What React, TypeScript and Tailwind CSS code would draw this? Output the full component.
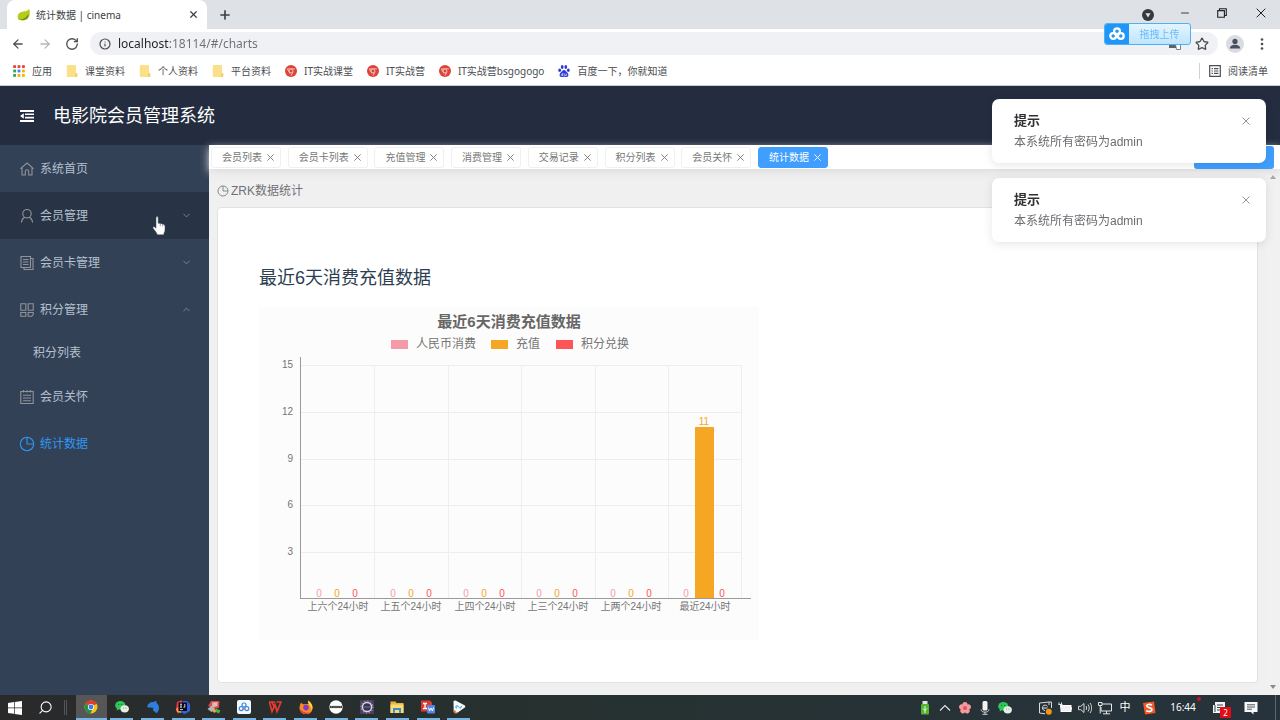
import type { ReactNode } from 'react';
import {
  ArrowLeft,
  ArrowRight,
  ChevronDown,
  ChevronUp,
  Info,
  Minus,
  Plus,
  RotateCw,
  Search,
  Star,
  X,
} from 'lucide-react';
import { clsx } from 'clsx';

const UI_FONT = "font-['Noto_Sans','Noto_Sans_CJK_SC',sans-serif]";
const PAGE_FONT = "font-['Liberation_Sans','Noto_Sans_CJK_SC',sans-serif]";

type BookmarkIcon = 'apps' | 'folder' | 'chrome' | 'baidu';

const BOOKMARKS: { label: string; icon: BookmarkIcon }[] = [
  { label: '应用', icon: 'apps' },
  { label: '课堂资料', icon: 'folder' },
  { label: '个人资料', icon: 'folder' },
  { label: '平台资料', icon: 'folder' },
  { label: 'IT实战课堂', icon: 'chrome' },
  { label: 'IT实战营', icon: 'chrome' },
  { label: 'IT实战营bsgogogo', icon: 'chrome' },
  { label: '百度一下，你就知道', icon: 'baidu' },
];

const TAGS = [
  '会员列表',
  '会员卡列表',
  '充值管理',
  '消费管理',
  '交易记录',
  '积分列表',
  '会员关怀',
  '统计数据',
];

const SERIES = [
  { name: '人民币消费', color: '#f79aa7', data: [0, 0, 0, 0, 0, 0], legendX: 132 },
  { name: '充值', color: '#f5a623', data: [0, 0, 0, 0, 0, 11], legendX: 232 },
  { name: '积分兑换', color: '#fd5558', data: [0, 0, 0, 0, 0, 0], legendX: 297 },
];

const PERIODS = [
  '上六个24小时',
  '上五个24小时',
  '上四个24小时',
  '上三个24小时',
  '上两个24小时',
  '最近24小时',
];

export default function App() {
  return (
    <div className={clsx('flex min-h-screen flex-col bg-white', UI_FONT)}>
      <TabStrip />
      <Toolbar />
      <BookmarkBar />
      <div className={clsx('flex flex-1 flex-col', PAGE_FONT)}>
        <header className="flex h-[59px] items-center gap-[19px] bg-[#242d40] pl-5 text-white">
          <button type="button" aria-label="折叠菜单">
            <FoldIcon />
          </button>
          <h1 className="text-[18px] leading-6">电影院会员管理系统</h1>
        </header>
        <div className="flex flex-1">
          <Sidebar />
          <Main />
        </div>
      </div>
      <Taskbar />
      <div className={clsx('fixed top-[99px] right-[14px] z-20 flex w-[274px] flex-col gap-[15px]', PAGE_FONT)}>
        <Notification />
        <Notification />
      </div>
      <UploadWidget />
    </div>
  );
}

/* ---------- Browser chrome ---------- */

function TabStrip() {
  return (
    <div className="flex h-[29px] items-center bg-[#dee1e6] pl-[7px] text-[#3c4043]">
      <div className="flex h-full w-[200px] items-center rounded-t-lg bg-white pr-2 pl-[10px]">
        <LeafIcon />
        <span className="ml-[6px] flex-1 text-[10px] leading-4">统计数据 | cinema</span>
        <button type="button" aria-label="关闭标签页">
          <X size={11} strokeWidth={2.6} />
        </button>
      </div>
      <button type="button" aria-label="新标签页" className="ml-[11px]">
        <Plus size={14} strokeWidth={2.8} />
      </button>
      <div className="ml-auto flex h-full items-center pr-[14px] pb-1">
        <svg viewBox="0 0 12 12" className="mt-1 mr-[25px] size-3">
          <circle cx="6" cy="6" r="6" fill="#35383c" />
          <path d="M3.4 4.2h5.2L6 8.4z" fill="#dee1e6" />
        </svg>
        <button type="button" aria-label="最小化" className="mr-[26px]">
          <Minus size={12} strokeWidth={2} />
        </button>
        <button type="button" aria-label="还原" className="mr-[29px]">
          <svg viewBox="0 0 10 10" className="size-[10px]" fill="none" stroke="#222" strokeWidth="1.1">
            <path d="M.7 2.6h6.7v6.7H.7zM2.5 2.4V.7h6.8v6.8H7.6" />
          </svg>
        </button>
        <button type="button" aria-label="关闭">
          <svg viewBox="0 0 10 10" className="size-[10px]" fill="none" stroke="#222" strokeWidth="1">
            <path d="M.7.7l8.6 8.6M9.3.7L.7 9.3" />
          </svg>
        </button>
      </div>
    </div>
  );
}

function Toolbar() {
  return (
    <div className="flex h-[29px] items-center pr-3 pl-[11px] text-[#4a4d51]">
      <div className="flex w-[79px] gap-[13px]">
        <button type="button" aria-label="后退">
          <ArrowLeft size={14} strokeWidth={2.2} />
        </button>
        <button type="button" aria-label="前进" className="text-[#b4b6ba]">
          <ArrowRight size={14} strokeWidth={2.2} />
        </button>
        <button type="button" aria-label="重新加载">
          <RotateCw size={14} strokeWidth={2.2} />
        </button>
      </div>
      <div className="flex h-[23px] flex-1 items-center rounded-full bg-[#f0f1f4] px-[9px]">
        <Info size={12} strokeWidth={2.4} />
        <input
          aria-label="地址栏"
          defaultValue="localhost:18114/#/charts"
          className="ml-[7px] min-w-0 flex-1 bg-[linear-gradient(90deg,#202124_51px,#6b6f74_51px)] bg-clip-text text-[12px] leading-4 text-transparent outline-none"
        />
        <svg viewBox="0 0 12 12" className="mr-[14px] size-3">
          <path d="M0 1h7l2 9H0z" fill="#5f6368" />
          <path d="M6 4h5.5v7.5H7.5z" fill="#fff" stroke="#5f6368" strokeWidth=".8" />
        </svg>
        <button type="button" aria-label="收藏">
          <Star size={14} strokeWidth={2.2} />
        </button>
      </div>
      <svg viewBox="0 0 18 18" className="ml-2 size-[18px]">
        <circle cx="9" cy="9" r="9" fill="#dadce3" />
        <circle cx="9" cy="6.4" r="2.6" fill="#4a4f5c" />
        <path d="M3.8 13.6c0-2.6 2.6-3.8 5.2-3.8s5.2 1.2 5.2 3.8z" fill="#4a4f5c" />
      </svg>
      <button type="button" aria-label="菜单" className="ml-3">
        <svg viewBox="0 0 12 12" className="size-3" fill="#4a4d51">
          <circle cx="6" cy="1.5" r="1.3" />
          <circle cx="6" cy="6" r="1.3" />
          <circle cx="6" cy="10.5" r="1.3" />
        </svg>
      </button>
    </div>
  );
}

function BookmarkBar() {
  return (
    <div className="flex h-7 items-center border-b border-[#c9ccd0] pr-3 pb-[2px] pl-[13px] text-[10px] leading-4 text-[#4a4d51]">
      <nav className="flex gap-[14px]">
        {BOOKMARKS.map((item) => (
          <a key={item.label} href="#" className="flex items-center gap-[7px] whitespace-nowrap">
            <BookmarkGlyph icon={item.icon} />
            {item.label}
          </a>
        ))}
      </nav>
      <a href="#" className="ml-auto flex items-center gap-[7px] border-l border-[#cfd1d5] pl-[9px]">
        <svg viewBox="0 0 12 12" className="size-3" fill="none" stroke="#4a4d51" strokeWidth="1.2">
          <path d="M.7.7h10.6v10.6H.7zM2.6 3.6h1.3M2.6 6h1.3M2.6 8.4h1.3M5 3.6h4.4M5 6h4.4M5 8.4h4.4" />
        </svg>
        阅读清单
      </a>
    </div>
  );
}

function BookmarkGlyph({ icon }: { icon: BookmarkIcon }) {
  if (icon === 'apps') {
    const colors = ['#e8453c', '#e8453c', '#e8453c', '#34a853', '#4285f4', '#f4b400', '#34a853', '#f4b400', '#f4b400'];
    return (
      <svg viewBox="0 0 12 12" className="size-3">
        {colors.map((color, i) => (
          <rect key={i} x={(i % 3) * 4.4 + 0.2} y={Math.floor(i / 3) * 4.4 + 0.2} width="2.8" height="2.8" fill={color} />
        ))}
      </svg>
    );
  }
  if (icon === 'folder') {
    return (
      <svg viewBox="0 0 12 12" className="size-3">
        <path d="M1.6 0h7.6c.5 0 .8.3.8.8v7.4h1.2v3c0 .5-.3.8-.8.8H1.6c-.5 0-.8-.3-.8-.8V.8c0-.5.3-.8.8-.8z" fill="#fbe08a" />
        <path d="M10 8.2h1.2v3c0 .5-.3.8-.8.8H9.2V9z" fill="#f2cb62" />
      </svg>
    );
  }
  if (icon === 'chrome') {
    return (
      <svg viewBox="0 0 12 12" className="size-3">
        <circle cx="6" cy="6" r="6" fill="#db4437" />
        <path d="M2.4 3.9h7.4M2.4 3.9L5 8.6M8 6.8L6 10.6" stroke="#fbe3e0" strokeWidth=".8" fill="none" />
        <circle cx="6" cy="6" r="1.9" fill="#db4437" stroke="#fbe3e0" strokeWidth=".7" />
      </svg>
    );
  }
  return (
    <svg viewBox="0 0 12 12" className="size-3" fill="#2f3bdb">
      <ellipse cx="1.7" cy="5.2" rx="1.4" ry="1.8" />
      <ellipse cx="4.2" cy="2" rx="1.4" ry="1.9" />
      <ellipse cx="7.8" cy="2" rx="1.4" ry="1.9" />
      <ellipse cx="10.3" cy="5.2" rx="1.4" ry="1.8" />
      <path d="M6 5c1.6 0 2 1.5 3.2 2.5C10.8 8.8 11 12 8.6 12 7.5 12 7 11.7 6 11.7S4.500 12 3.400 12C1 12 1.200 8.800 2.800 7.500 4 6.500 4.400 5 6 5z" />
      <path d="M4.900 8v2.500H3.700V9.100h1.200M6.700 8.600v1.900h1.700V8.600" fill="none" stroke="#fff" strokeWidth=".6" />
    </svg>
  );
}

function LeafIcon() {
  return (
    <svg viewBox="0 0 13 13" className="size-[13px]">
      <path d="M12.300.8c.9 4.200.6 8.200-2.300 10.100-2.600 1.700-6.300 1.400-8.700.6C-.4 8.400 1 5 4.400 4c2.800-.8 6-.3 7.900-3.200z" fill="#b5cc18" />
      <path d="M1.300 11.500c4.200.2 8.200-2 10.400-6.100.2 2.400-.3 4.300-1.700 5.500-2.600 1.700-6.300 1.400-8.700.6z" fill="#6f9c12" />
    </svg>
  );
}

function UploadWidget() {
  return (
    <button
      type="button"
      className="fixed top-[23px] right-[89px] z-30 flex h-[22px] w-[87px] items-stretch overflow-hidden rounded-[3px] border border-[#4db1f5] bg-gradient-to-b from-[#e3f5ff] to-[#bfe5fd] text-[10px] text-[#6bbcf7]"
    >
      <span className="flex w-6 items-center justify-center bg-[#2196f9]">
        <NetdiskIcon />
      </span>
      <span className="flex flex-1 items-center justify-center">拖拽上传</span>
    </button>
  );
}

function NetdiskIcon() {
  return (
    <svg viewBox="0 0 16 14" className="h-[14px] w-4" fill="none" stroke="#fff" strokeWidth="2.3">
      <circle cx="8" cy="4.2" r="2.9" />
      <circle cx="4.2" cy="9" r="2.9" />
      <circle cx="11.8" cy="9" r="2.9" />
    </svg>
  );
}

/* ---------- Page ---------- */

function Sidebar() {
  return (
    <nav className="flex w-[209px] shrink-0 flex-col bg-[#334157] text-[12px] text-[#b4c0ce]">
      <MenuItem label="系统首页" icon={<path d="M1.5 7.7L8 2l6.5 5.7M3 6.5V14h3.300v-3.500a1.700 1.700 0 0 1 3.400 0V14H13V6.500" />} />
      <MenuItem
        label="会员管理"
        hovered
        arrow="down"
        icon={<path d="M8 1.500a4.200 4.200 0 1 1 0 8.400 4.200 4.200 0 0 1 0-8.400zM5.600 9.200C3.700 10.300 2.600 12 2.400 14.500M10.400 9.200c1.900 1.100 3 2.800 3.200 5.300" />}
      />
      <MenuItem
        label="会员卡管理"
        arrow="down"
        icon={<path d="M2 1.500h9.500v11H2zM4 4.500h5.500M4 7h5.500M4 9.500h5.500M11.500 3.500H14v11H5v-2" />}
      />
      <MenuItem
        label="积分管理"
        arrow="up"
        icon={<path d="M1.800 1.800h5v6.400h-5zM9.200 1.800h5v6.400h-5zM1.800 10.500h5v3.800h-5zM9.200 10.500h5v2l-1.500 1.800H9.200z" />}
      />
      <a href="#" className="flex h-10 items-center pl-[33px]">
        积分列表
      </a>
      <MenuItem
        label="会员关怀"
        icon={<path d="M1.800 2.500h12.400v12H1.800zM4.500 1v2.500M8 1v2.500M11.500 1v2.500M4 6.200h8M4 9h8M4 11.800h8" />}
      />
      <MenuItem label="统计数据" active icon={<PiePath />} />
    </nav>
  );
}

interface MenuItemProps {
  label: string;
  icon: ReactNode;
  arrow?: 'up' | 'down';
  hovered?: boolean;
  active?: boolean;
}

function MenuItem({ label, icon, arrow, hovered, active }: MenuItemProps) {
  const Arrow = arrow === 'up' ? ChevronUp : ChevronDown;
  return (
    <a
      href="#"
      className={clsx(
        'relative flex h-[47px] items-center gap-[5px] pr-[17px] pl-[19px]',
        hovered && 'bg-[#283446]',
        active && 'text-[#2f97f0]',
      )}
    >
      <svg
        viewBox="0 0 16 16"
        className={clsx('size-4', !active && 'text-[#909399]')}
        fill="none"
        stroke="currentColor"
        strokeWidth="1.1"
      >
        {icon}
      </svg>
      <span className="flex-1">{label}</span>
      {arrow && <Arrow size={11} strokeWidth={1.8} className="text-[#8490a0]" />}
      {hovered && <HandCursor />}
    </a>
  );
}

function HandCursor() {
  return (
    <svg viewBox="0 0 14 20" className="absolute top-6 left-[152px] h-5 w-[14px]">
      <path
        d="M4 1.800c0-1.600 2.200-1.600 2.200 0v5.400c2.400.2 6.800.6 6.800 3v3.600c0 2.400-1.200 2.600-1.200 5H5.200c0-1.800-2.600-4-4.100-6.600-.8-1.500.9-2 2-.9l.9.900z"
        fill="#fff"
        stroke="#39424f"
        strokeWidth=".5"
      />
      <path d="M8.300 7.800v2.400M10.600 8.200v2.200" stroke="#39424f" strokeWidth=".5" />
    </svg>
  );
}

function Main() {
  return (
    <main className="flex min-w-0 flex-1 flex-col bg-[#f0f0f0]">
      <div className="relative z-10 flex h-6 items-center bg-white pr-[6px] pl-[2px] shadow-[0_3px_8px_#ddd]">
        <ul className="flex w-[617px] shrink-0 justify-between">
          {TAGS.map((tag) => (
            <Tag key={tag} label={tag} active={tag === '统计数据'} />
          ))}
        </ul>
        <button type="button" aria-label="标签选项" className="ml-auto h-[23px] w-20 rounded-[3px] bg-[#409eff]" />
      </div>
      <div className="flex flex-1">
        <div className="flex min-w-0 flex-1 flex-col px-2 py-3">
          <div className="flex h-5 items-center gap-[2px] text-[12px] text-[#707276]">
            <svg viewBox="0 0 16 16" className="size-3" fill="none" stroke="#85888c" strokeWidth="1.3">
              <PiePath />
            </svg>
            ZRK数据统计
          </div>
          <section className="mt-[6px] flex-1 rounded-[4px] border border-[#e2e2e2] bg-white px-[41px] pt-[58px] pb-10">
            <h2 className="text-[18px] leading-6 text-[#2c3e50]">最近6天消费充值数据</h2>
            <div className="mt-[17px]">
              <BarChart />
            </div>
          </section>
        </div>
        <div className="flex w-[14px] flex-col items-center justify-between bg-[#f1f1f1] py-[5px]">
          <svg viewBox="0 0 8 6" className="h-[6px] w-2">
            <path d="M1 5l3-4 3 4z" fill="#a3a3a3" />
          </svg>
          <svg viewBox="0 0 8 6" className="h-[6px] w-2">
            <path d="M1 1l3 4 3-4z" fill="#8a8a8a" />
          </svg>
        </div>
      </div>
    </main>
  );
}

function Tag({ label, active }: { label: string; active: boolean }) {
  return (
    <li
      className={clsx(
        'flex h-[21px] items-center rounded-[3px] border pr-[5px] pl-[10px] text-[10px]',
        active ? 'border-[#409eff] bg-[#409eff] text-white' : 'border-[#eff0f2] bg-white text-[#777]',
      )}
    >
      <a href="#">{label}</a>
      <button type="button" aria-label={`关闭${label}`} className="ml-1">
        <CloseIcon className="size-[9px]" />
      </button>
    </li>
  );
}

function Notification() {
  return (
    <div role="alert" className="flex h-16 justify-between rounded-[7px] bg-white pt-3 pr-[15px] pl-[22px] shadow-[0_2px_10px_rgba(0,0,0,0.1)]">
      <div>
        <h2 className="text-[13px] leading-5 font-bold text-[#303133]">提示</h2>
        <p className="text-[12px] leading-[22px] text-[#6a6c70]">本系统所有密码为admin</p>
      </div>
      <button type="button" aria-label="关闭通知" className="h-5 text-[#909399]">
        <CloseIcon className="size-[10px]" />
      </button>
    </div>
  );
}

/** Grouped bar chart of the last six 24-hour periods. */
function BarChart() {
  const left = 42;
  const base = 292;
  const slot = 73.4;
  const unit = 15.6;
  const barWidth = 18;

  return (
    <svg viewBox="0 0 500 333" className="h-[333px] w-[500px] bg-[#fcfcfc]" fontSize="10" fill="#757575">
      <text x="250" y="20" fontSize="15" fontWeight="bold" textAnchor="middle" fill="#666">
        最近6天消费充值数据
      </text>
      {SERIES.map((series) => (
        <g key={series.name}>
          <rect x={series.legendX} y="33" width="17" height="9" fill={series.color} />
          <text x={series.legendX + 25} y="41" fontSize="12">
            {series.name}
          </text>
        </g>
      ))}

      {/* Grid and value axis */}
      {[3, 6, 9, 12, 15].map((value) => {
        const y = Math.round(base - value * unit);
        return (
          <g key={value}>
            <rect x={left} y={y} width="441" height="1" fill="#eee" />
            <text x="34" y={y + 3} textAnchor="end">
              {value}
            </text>
          </g>
        );
      })}
      {PERIODS.map((period, i) => (
        <g key={period}>
          <rect x={Math.round(left + (i + 1) * slot)} y="58" width="1" height="234" fill="#eee" />
          <text x={Math.round(left + (i + 0.5) * slot)} y="303" textAnchor="middle">
            {period}
          </text>
        </g>
      ))}

      {/* Bars with their value labels */}
      {SERIES.map((series, s) =>
        series.data.map((value, i) => {
          const center = Math.floor(left + (i + 0.5) * slot + (s - 1) * barWidth);
          const height = Math.round(value * unit);
          return (
            <g key={`${series.name}-${i}`} fill={series.color}>
              <rect x={center - 9} y={base - height} width={19} height={height} />
              <text x={center} y={base - height - 2} textAnchor="middle">
                {value}
              </text>
            </g>
          );
        }),
      )}

      <rect x="41" y="50" width="1" height="242" fill="#999" />
      <rect x="41" y="291" width="451" height="1" fill="#999" />
    </svg>
  );
}

function PiePath() {
  return <path d="M8 1.300A6.700 6.700 0 1 0 14.700 8 6.700 6.700 0 0 0 8 1.300zV8h6.700" />;
}

function FoldIcon() {
  return (
    <svg viewBox="0 0 14 12" className="h-3 w-[14px]" fill="#fff">
      <path d="M0 0h14v2H0zM5 3.400h9v1.700H5zM5 6.800h9v1.700H5zM0 10h14v2H0zM3.800 3.200v5.600L0 6z" />
    </svg>
  );
}

function CloseIcon({ className }: { className: string }) {
  return (
    <svg viewBox="0 0 10 10" className={className} fill="none" stroke="currentColor" strokeWidth="1">
      <path d="M1.500 1.500l7 7M8.500 1.500l-7 7" />
    </svg>
  );
}

/* ---------- Desktop taskbar ---------- */

const TASKS: { name: string; icon: ReactNode }[] = [
  {
    name: 'Chrome',
    icon: (
      <>
        <circle cx="7" cy="7" r="6.5" fill="#fbc116" />
        <path d="M7 7L1.400 3.700A6.500 6.500 0 0 1 12.600 3.700z" fill="#e33b2e" />
        <path d="M1.400 3.700A6.500 6.500 0 0 0 6.400 13.500L9 8z" fill="#229342" />
        <circle cx="7" cy="7" r="3.100" fill="#fff" />
        <circle cx="7" cy="7" r="2.400" fill="#3b7ded" />
      </>
    ),
  },
  { name: '微信', icon: <WechatShape /> },
  {
    name: 'Navicat',
    icon: <path d="M1 7C2 3 5 1.500 8 2c1-.9 1.800-1 2.600-.8l-.3 1.500c2 1.300 3 3.600 2.600 6.200-.3 2-1.400 3.500-2.600 4.300L8.700 11.500C7 11 6.500 9.500 7.500 8 6 7.600 3.500 8 1 7z" fill="#2f7fe0" />,
  },
  {
    name: 'IntelliJ IDEA',
    icon: (
      <>
        <path d="M1 2l5-2 1 7-5 7-2-4z" fill="#e8395e" />
        <path d="M7 1h4l3 3v7l-5 3-5-2z" fill="#2f63e6" />
        <path d="M0 9l4-3 1 7-4-1z" fill="#f5953a" />
        <rect x="2.500" y="2.500" width="8.500" height="8.500" fill="#0b0b12" />
        <path d="M4 4.200h2M5 4.200v3M4 7.200h2M8.800 4v3.200H7.400M4 9.600h3" stroke="#fff" strokeWidth=".8" fill="none" />
      </>
    ),
  },
  {
    name: '截图工具',
    icon: (
      <>
        <path d="M4 1l8.500 0-.5 7-5 1-6-3z" fill="#d9474a" />
        <path d="M5 2.500l5.500-.5v4l-5 1.500z" fill="#e8b7b4" />
        <path d="M.5 9l5-4 3 5-4 2z" fill="#aeb6b9" />
        <circle cx="7.500" cy="11" r="1.700" fill="#f5a623" />
        <path d="M9 8.500l4.500 2-1.500 3L8.800 12z" fill="#4caf50" />
      </>
    ),
  },
  {
    name: '百度网盘',
    icon: (
      <>
        <rect width="14" height="14" rx="2" fill="#f5f9fd" />
        <g fill="none" strokeWidth="1.200">
          <circle cx="7" cy="5" r="2" stroke="#2d8cf0" />
          <circle cx="4.200" cy="8.600" r="2" stroke="#2d8cf0" />
          <circle cx="9.800" cy="8.600" r="2" stroke="#2d8cf0" />
          <path d="M5.800 9.800L8.200 7.400" stroke="#e05a68" />
        </g>
      </>
    ),
  },
  { name: 'WPS', icon: <path d="M1 2h6M1.500 2.300L4 11.500 7 4.500 9 11.500 13 2H8.500M4 2.300l2 4" fill="none" stroke="#e93a2d" strokeWidth="1.700" /> },
  {
    name: 'Firefox',
    icon: (
      <>
        <path d="M9 .5c2.500 1.500 4.500 4 4.500 7A6.500 6.500 0 1 1 .8 6c.1-1.500.6-2.500 1.300-3.300L4 4.200 9.500 4z" fill="#ff8a1c" />
        <path d="M9 .5c2.500 1.500 4.500 4 4.500 7 0 1-.3 2-.7 2.700C12 6 9 5 9 .5z" fill="#ffd43a" />
        <path d="M1 9a6.300 6.300 0 0 0 10.500 3.200C8 13.500 3 12 1 9z" fill="#e5315b" />
        <circle cx="7" cy="7.600" r="2.800" fill="#7a3fd0" />
      </>
    ),
  },
  {
    name: '录屏',
    icon: (
      <>
        <circle cx="7" cy="7" r="6.700" fill="#fff" />
        <path d="M1 5.900h12v2.200H1z" fill="#3a3a3a" />
        <path d="M2 7h10" stroke="#aaa" strokeWidth=".8" strokeDasharray="1 .8" />
      </>
    ),
  },
  {
    name: 'Eclipse',
    icon: (
      <>
        <rect width="14" height="14" fill="#4c3f66" />
        <circle cx="7" cy="7" r="4.600" fill="#33364e" stroke="#d9d5e3" strokeWidth="1.500" />
        <circle cx="7" cy="7" r="6" fill="none" stroke="#b9b4c8" strokeWidth="1" strokeDasharray="1.200 1.900" />
        <path d="M3.600 7h6.800" stroke="#77709a" strokeWidth="1" />
      </>
    ),
  },
  {
    name: '文件资源管理器',
    icon: (
      <>
        <path d="M.5 1.500h5l1 1.500h7v10H.5z" fill="#e9b53a" />
        <path d="M.5 4.500h13V13H.5z" fill="#fcdb74" />
        <path d="M3 12.800V8h8v4.800H9V10H5v2.800z" fill="#3a8fc9" />
      </>
    ),
  },
  {
    name: '翻译',
    icon: (
      <>
        <path d="M0 .5h9l2 2v9H0z" fill="#e03a2e" />
        <path d="M2 3.500h4M4 3.500v5M2 8.500h4" stroke="#fff" strokeWidth="1.300" />
        <rect x="6" y="5" width="8" height="8.500" rx="1" fill="#5087ec" />
        <path d="M7.500 7.500l1 3.500 1.500-3 1.500 3 1-3.500" stroke="#fff" strokeWidth="1" fill="none" />
      </>
    ),
  },
  {
    name: '播放器',
    icon: (
      <>
        <path d="M1.500 1.500C2 .4 3 .3 4 .8l8.500 4.400c1 .6 1 1.900 0 2.600L5 13c-1.500.8-3 0-3.300-1.500z" fill="#f7fafa" />
        <path d="M1.500 9l3.800 4c-1.700.8-3.300 0-3.600-1.500z" fill="#f0703c" />
        <path d="M5 8.200c-1.800 0-1.800-2.400 0-2.400 2 0 2 2.400 3.500 2.400l1.200-2.400" fill="none" stroke="#2ba5c4" strokeWidth="1" />
      </>
    ),
  },
];

function WechatShape() {
  return (
    <>
      <ellipse cx="5.300" cy="5.300" rx="5.100" ry="4.300" fill="#2fc75b" />
      <path d="M2 8l-.5 2.500L4.500 9z" fill="#2fc75b" />
      <ellipse cx="9.700" cy="8.800" rx="4.200" ry="3.600" fill="#e6efe6" />
      <circle cx="3.700" cy="4.300" r=".6" fill="#14532d" />
      <circle cx="6.800" cy="4.300" r=".6" fill="#14532d" />
      <circle cx="8.500" cy="8" r=".5" fill="#666" />
      <circle cx="11" cy="8" r=".5" fill="#666" />
    </>
  );
}

function Glyph({ children }: { children: ReactNode }) {
  return (
    <svg viewBox="0 0 14 14" className="size-[14px]">
      {children}
    </svg>
  );
}

function TrayItem({ name, children }: { name: string; children: ReactNode }) {
  return (
    <button type="button" aria-label={name} className="flex w-5 items-center justify-center">
      <Glyph>{children}</Glyph>
    </button>
  );
}

function Taskbar() {
  return (
    <footer className="flex h-[25px] bg-gradient-to-r from-[#2a2a2b] via-[#26312f] via-40% to-[#26333c] text-white">
      <button type="button" aria-label="开始" className="flex w-[30px] items-center justify-center">
        <Glyph>
          <path d="M0 2l6-.9v5.500H0zM6.700 1L14 0v6.600H6.700zM0 7.300h6v5.500L0 12zM6.700 7.300H14V14l-7.300-1z" fill="#fff" />
        </Glyph>
      </button>
      <button type="button" aria-label="搜索" className="flex w-[31px] items-center justify-center">
        <Search size={15} strokeWidth={1.7} className="-scale-x-100" />
      </button>
      <span className="my-[5px] mr-[9px] ml-[3px] w-[3px] border-x border-[#555]" />
      <div className="flex w-[398px]">
        {TASKS.map((task, i) => (
          <button
            key={task.name}
            type="button"
            aria-label={task.name}
            className={clsx('flex flex-1 flex-col items-center', i === 0 && 'bg-[#565656]')}
          >
            <span className="flex flex-1 items-center">
              <Glyph>{task.icon}</Glyph>
            </span>
            <span className={clsx('h-[2px] bg-[#76b4e4]', i === 0 ? 'w-full' : 'w-[23px]')} />
          </button>
        ))}
      </div>
      <div className="ml-auto flex">
        <TrayItem name="USB">
          <rect x="4.500" y="0" width="5" height="3.500" fill="#dfe6df" />
          <rect x="3" y="3" width="8" height="10.500" rx="1" fill="#55b52e" />
          <path d="M7 5v7M5 7.500l2 2 2-2" stroke="#fff" strokeWidth=".9" fill="none" />
        </TrayItem>
        <TrayItem name="显示隐藏的图标">
          <path d="M2 9.500l5-5 5 5" stroke="#e6e6e6" strokeWidth="1.100" fill="none" />
        </TrayItem>
        <TrayItem name="樱花">
          {[0, 72, 144, 216, 288].map((angle) => (
            <circle key={angle} cx="7" cy="3.500" r="2.600" fill="#f59a9f" transform={`rotate(${angle} 7 7)`} />
          ))}
          <circle cx="7" cy="7" r="2" fill="#d9555e" />
        </TrayItem>
        <TrayItem name="麦克风">
          <rect x="4.500" y="0" width="5" height="9.500" rx="1.500" fill="#f2f2f2" />
          <path d="M3 8.500c0 3.500 8 3.500 8 0M7 11v2M4.500 13.300h5" stroke="#cfd3d6" strokeWidth="1" fill="none" />
        </TrayItem>
        <TrayItem name="微信通知">
          <WechatShape />
        </TrayItem>
        <span className="w-5" />
        <TrayItem name="更新">
          <path d="M11 1L1.500 2v10l5.500.8M11 1h2.500v6M11 1v3" stroke="#dcdcdc" strokeWidth="1" fill="none" />
          <path d="M9.500 5.500A2.700 2.700 0 1 0 7 9.500M4.500 7h5" stroke="#dcdcdc" strokeWidth="1" fill="none" />
          <circle cx="10.800" cy="10.800" r="3" fill="#f7960f" />
        </TrayItem>
        <TrayItem name="电池">
          <rect x="3" y="4.500" width="10" height="6" fill="#f0f0f0" stroke="#fff" />
          <path d="M13.500 6v3M.5 3.500h4M1 1.500v2M3.500 1.500v2M2.500 4v3.500H4" stroke="#e6e6e6" strokeWidth="1" fill="none" />
        </TrayItem>
        <TrayItem name="音量">
          <path d="M.5 5.300h2.300L6 2.500v9L2.800 8.700H.5zM8 5c.8 1.200.8 2.800 0 4M10 3.500c1.600 2 1.600 5 0 7M12 2c2.200 3 2.200 7 0 10" stroke="#e6e6e6" strokeWidth=".9" fill="none" />
        </TrayItem>
        <TrayItem name="网络">
          <path d="M4 3h9.500v7H3V6M8.500 10v2.800M5 12.800h7M.5 1.500h3.500v3H.5zM2.200 4.500v8" stroke="#e6e6e6" strokeWidth="1" fill="none" />
        </TrayItem>
        <button type="button" className="flex w-5 items-center justify-center text-[11px]">
          中
        </button>
        <button type="button" aria-label="搜狗输入法" className="flex w-7 items-center justify-center">
          <Glyph>
            <path d="M1 2l11-1.500L13.500 12 3 13.500z" fill="#f05a28" />
            <path d="M10 4C7.500 3 4.700 3.300 4.700 5s5.300 1.500 5.300 3.600S6.500 11 4.300 9.800" stroke="#fff" strokeWidth="1.700" fill="none" />
          </Glyph>
        </button>
        <time className="flex w-10 items-center justify-center text-[10px]">16:44</time>
        <button type="button" aria-label="消息" className="relative flex w-8 items-center justify-center">
          <Glyph>
            <path d="M3 1h10v11H1V4h2z" fill="#f4f4f4" />
            <path d="M5 4h6M5 6.500h6M5 9h4M3 4v7" stroke="#37434b" strokeWidth="1" />
          </Glyph>
          <span className="absolute right-1 bottom-[2px] flex size-[11px] items-center justify-center bg-[#e30b14] text-[8px] leading-none">
            2
          </span>
          <span className="absolute top-[2px] left-[-6px] size-1 rounded-full bg-[#d0121b]" />
        </button>
        <button type="button" aria-label="通知中心" className="flex w-8 items-center justify-center">
          <Glyph>
            <path d="M.5 1h13v10H9.500v2.500L7 11H.5z" fill="#f8f8f8" />
            <path d="M3 3.800h8M3 6h8M3 8.200h5" stroke="#37434b" strokeWidth=".9" />
          </Glyph>
        </button>
        <span className="mr-1 ml-2 w-[1px] bg-[#5d676e]" />
      </div>
    </footer>
  );
}
